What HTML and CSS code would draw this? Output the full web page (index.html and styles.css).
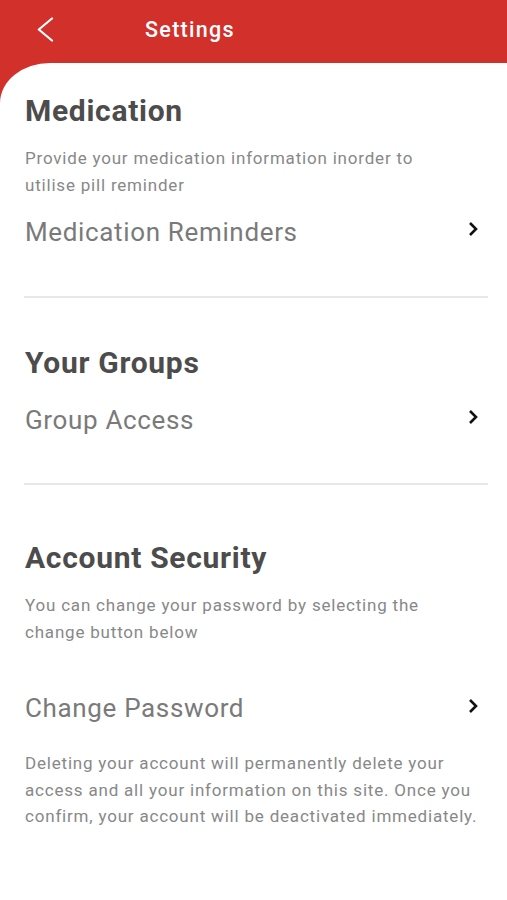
FILE: index.html
```html
<!DOCTYPE html>
<html lang="en">
<head>
<meta charset="utf-8">
<title>Settings</title>
<link rel="stylesheet" href="styles.css">
</head>
<body>
<div class="app">
  <header class="topbar">
    <button class="back" aria-label="Back">
      <svg width="18" height="26" viewBox="0 0 18 26"><path d="M15 1.5 L1.8 12.5 L15 23.5" fill="none" stroke="#fff" stroke-width="2.2" stroke-linecap="round" stroke-linejoin="round"/></svg>
    </button>
    <h1 class="title">Settings</h1>
  </header>
  <main class="panel">
    <section class="section first">
      <h2 class="heading">Medication</h2>
      <p class="desc">Provide your medication information inorder to utilise pill reminder</p>
      <a class="row" href="#">
        <span class="row-label">Medication Reminders</span>
        <svg class="chev" width="12" height="16" viewBox="0 0 12 16"><path d="M3 2 L9 8 L3 14" fill="none" stroke="#111" stroke-width="2.6"/></svg>
      </a>
    </section>
    <hr class="divider">
    <section class="section groups">
      <h2 class="heading">Your Groups</h2>
      <a class="row" href="#">
        <span class="row-label">Group Access</span>
        <svg class="chev" width="12" height="16" viewBox="0 0 12 16"><path d="M3 2 L9 8 L3 14" fill="none" stroke="#111" stroke-width="2.6"/></svg>
      </a>
    </section>
    <hr class="divider second">
    <section class="section security">
      <h2 class="heading">Account Security</h2>
      <p class="desc">You can change your password by selecting the change button below</p>
      <a class="row pw" href="#">
        <span class="row-label">Change Password</span>
        <svg class="chev" width="12" height="16" viewBox="0 0 12 16"><path d="M3 2 L9 8 L3 14" fill="none" stroke="#111" stroke-width="2.6"/></svg>
      </a>
      <p class="desc note">Deleting your account will permanently delete your access and all your information on this site. Once you confirm, your account will be deactivated immediately.</p>
    </section>
  </main>
</div>
</body>
</html>
```

FILE: styles.css
```css
* { box-sizing: border-box; }
html, body { margin: 0; padding: 0; }
body {
  font-family: Roboto, "Noto Sans", Arial, sans-serif;
  background: #d1302b;
  width: 507px;
  height: 900px;
  overflow: hidden;
}
.app { display: flex; flex-direction: column; height: 900px; }
.topbar {
  height: 63px;
  display: flex;
  align-items: center;
  padding: 0 0 4px 37px;
  color: #fff;
}
.back {
  background: none;
  border: 0;
  padding: 0;
  width: 18px;
  height: 26px;
  display: flex;
  cursor: pointer;
}
.title {
  margin: 0 0 0 90px;
  font-size: 21.5px;
  font-weight: 500;
  letter-spacing: 1.3px;
  line-height: normal;
}
.panel {
  flex: 1;
  background: #fff;
  border-top-left-radius: 50px 40px;
  padding: 30px 19px 0 25px;
}
.section { display: flex; flex-direction: column; }
.heading {
  margin: 0;
  font-size: 30px;
  font-weight: 700;
  letter-spacing: 0.7px;
  color: #4c4c4c;
  line-height: 36px;
}
.desc {
  margin: 16px 0 0;
  max-width: 450px;
  font-size: 17px;
  letter-spacing: 0.8px;
  line-height: 26.7px;
  color: #888888;
}
.first .desc { max-width: 435px; }
.row {
  display: flex;
  align-items: center;
  justify-content: space-between;
  text-decoration: none;
  color: #7a7a7a;
  font-size: 26px;
  letter-spacing: 0.65px;
  line-height: 40px;
  height: 40px;
  padding-right: 9px;
  margin-top: 13.5px;
}
.chev { flex: none; margin-top: -5px; }
.divider {
  border: 0;
  height: 2px;
  background: #e8e8e8;
  margin: 44.5px 0 0 -1px;
}
.groups { padding-top: 47px; }
.groups .row { margin-top: 18.5px; }
.divider.second { margin-top: 43px; }
.security { padding-top: 55.5px; }
.security .desc { margin-top: 16px; }
.row.pw { margin-top: 42.5px; }
.desc.note { margin-top: 21.5px; max-width: 462px; }
```
